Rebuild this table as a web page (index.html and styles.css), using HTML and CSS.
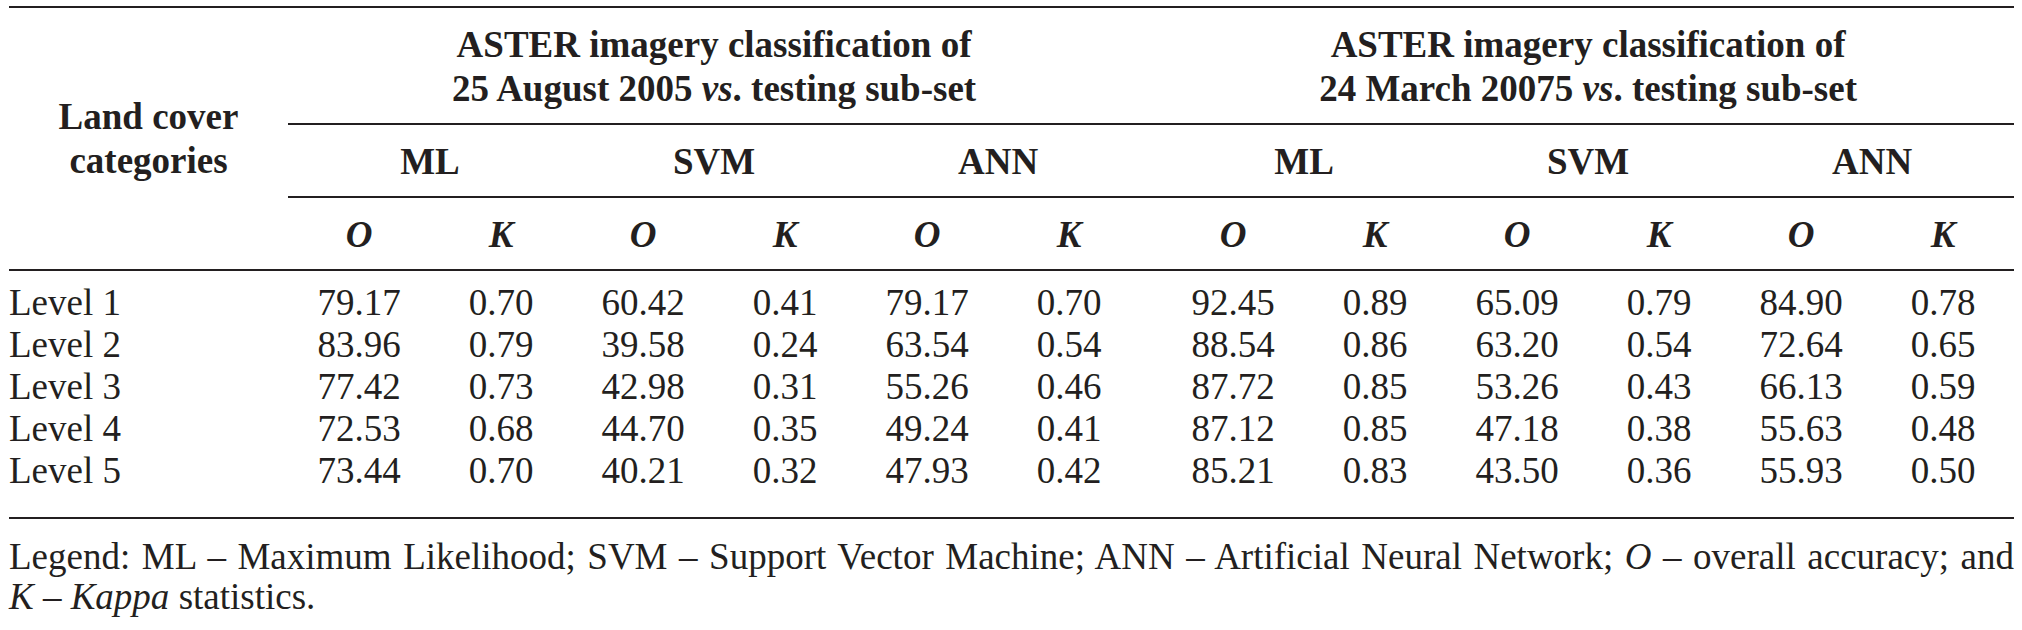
FILE: index.html
```html
<!DOCTYPE html>
<html lang="en">
<head>
<meta charset="utf-8">
<title>ASTER imagery classification accuracy</title>
<link rel="stylesheet" href="styles.css">
</head>
<body>
<div class="page">
  <table class="results">
    <colgroup>
      <col class="c-label">
      <col class="c-data"><col class="c-data"><col class="c-data"><col class="c-data"><col class="c-data"><col class="c-data">
      <col class="c-gap">
      <col class="c-data"><col class="c-data"><col class="c-data"><col class="c-data"><col class="c-data"><col class="c-data">
    </colgroup>
    <thead>
      <tr class="r-group">
        <th rowspan="3" class="label-head">Land cover<br>categories</th>
        <th colspan="6" class="group">ASTER imagery classification of<br>25 August 2005 <i>vs</i>. testing sub-set</th>
        <th class="gap"></th>
        <th colspan="6" class="group">ASTER imagery classification of<br>24 March 20075 <i>vs</i>. testing sub-set</th>
      </tr>
      <tr class="r-method">
        <th colspan="2">ML</th>
        <th colspan="2">SVM</th>
        <th colspan="2">ANN</th>
        <th class="gap"></th>
        <th colspan="2">ML</th>
        <th colspan="2">SVM</th>
        <th colspan="2">ANN</th>
      </tr>
      <tr class="r-stat">
        <th><i>O</i></th><th><i>K</i></th>
        <th><i>O</i></th><th><i>K</i></th>
        <th><i>O</i></th><th><i>K</i></th>
        <th class="gap"></th>
        <th><i>O</i></th><th><i>K</i></th>
        <th><i>O</i></th><th><i>K</i></th>
        <th><i>O</i></th><th><i>K</i></th>
      </tr>
    </thead>
    <tbody>
      <tr>
        <td class="cat">Level 1</td>
        <td>79.17</td><td>0.70</td><td>60.42</td><td>0.41</td><td>79.17</td><td>0.70</td>
        <td class="gap"></td>
        <td>92.45</td><td>0.89</td><td>65.09</td><td>0.79</td><td>84.90</td><td>0.78</td>
      </tr>
      <tr>
        <td class="cat">Level 2</td>
        <td>83.96</td><td>0.79</td><td>39.58</td><td>0.24</td><td>63.54</td><td>0.54</td>
        <td class="gap"></td>
        <td>88.54</td><td>0.86</td><td>63.20</td><td>0.54</td><td>72.64</td><td>0.65</td>
      </tr>
      <tr>
        <td class="cat">Level 3</td>
        <td>77.42</td><td>0.73</td><td>42.98</td><td>0.31</td><td>55.26</td><td>0.46</td>
        <td class="gap"></td>
        <td>87.72</td><td>0.85</td><td>53.26</td><td>0.43</td><td>66.13</td><td>0.59</td>
      </tr>
      <tr>
        <td class="cat">Level 4</td>
        <td>72.53</td><td>0.68</td><td>44.70</td><td>0.35</td><td>49.24</td><td>0.41</td>
        <td class="gap"></td>
        <td>87.12</td><td>0.85</td><td>47.18</td><td>0.38</td><td>55.63</td><td>0.48</td>
      </tr>
      <tr>
        <td class="cat">Level 5</td>
        <td>73.44</td><td>0.70</td><td>40.21</td><td>0.32</td><td>47.93</td><td>0.42</td>
        <td class="gap"></td>
        <td>85.21</td><td>0.83</td><td>43.50</td><td>0.36</td><td>55.93</td><td>0.50</td>
      </tr>
    </tbody>
  </table>
  <p class="legend">Legend: ML – Maximum Likelihood; SVM – Support Vector Machine; ANN – Artificial Neural Network; <i>O</i> – overall accuracy; and <span class="nw"><i>K</i> – <i>Kappa</i></span> statistics.</p>
</div>
</body>
</html>
```

FILE: styles.css
```css
html, body {
  margin: 0;
  padding: 0;
  background: #ffffff;
}

body {
  color: #231f20;
  font-family: "Liberation Serif", "Times New Roman", serif;
  font-size: 37px;
}

.page {
  width: 2005px;
  padding: 6px 0 0 9px;
}

.results {
  width: 2005px;
  table-layout: fixed;
  border-collapse: separate;
  border-spacing: 0;
  border-top: 2px solid #231f20;
}

.c-label { width: 279px; }
.c-data { width: 142px; }
.c-gap { width: 22px; }

.results th,
.results td {
  padding: 0;
}

.results th {
  font-weight: bold;
  text-align: center;
  line-height: 44px;
}

.results th i {
  font-style: italic;
}

.results .label-head {
  vertical-align: middle;
  border-bottom: 2px solid #231f20;
}

.r-group .group,
.r-group .gap,
.r-method th,
.r-stat th {
  padding: 15px 0 12px;
  border-bottom: 2px solid #231f20;
}

.results td {
  line-height: 42px;
  text-align: center;
  font-weight: normal;
}

.results td.cat {
  text-align: left;
}

.results tbody tr:first-child td {
  padding-top: 11px;
}

.results tbody tr:last-child td {
  padding-bottom: 25px;
  border-bottom: 2px solid #231f20;
}

.legend {
  margin: 18px 0 0;
  width: 2005px;
  line-height: 40px;
  text-align: justify;
}

.nw {
  white-space: nowrap;
}
```
